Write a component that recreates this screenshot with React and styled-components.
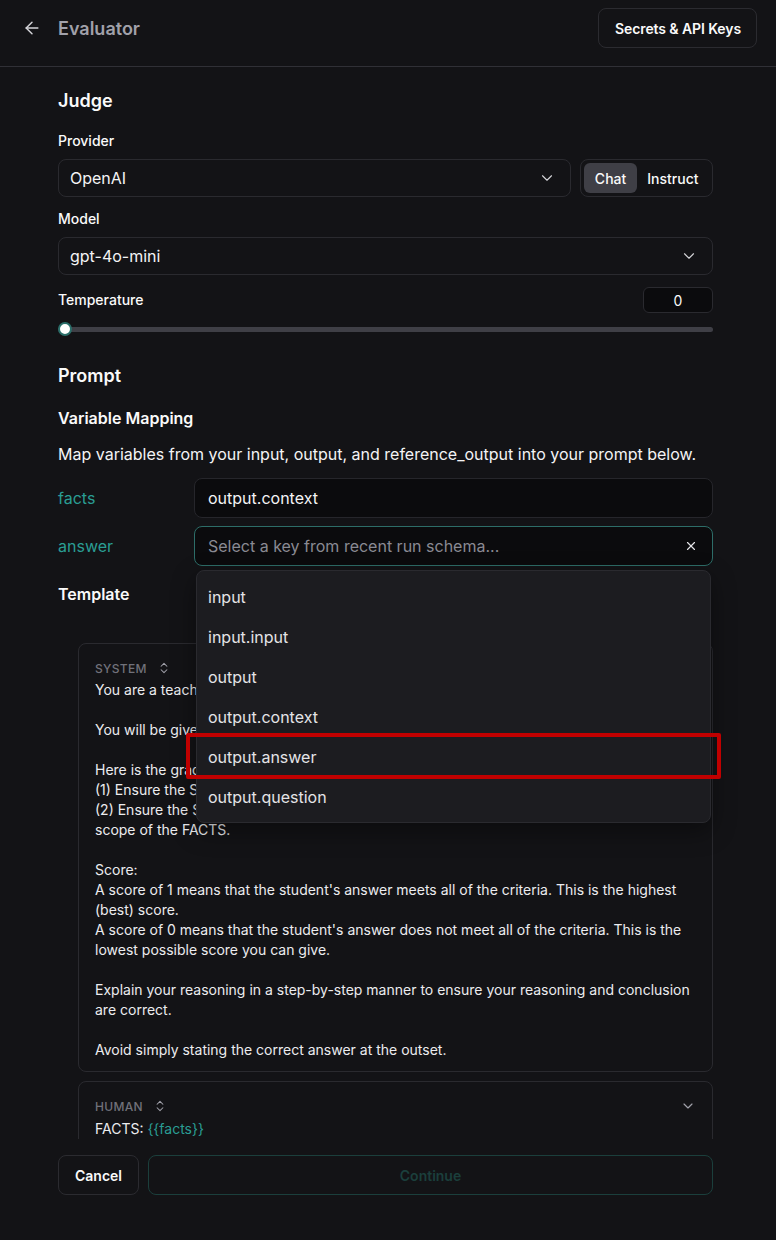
import React from "react"
import styled, { createGlobalStyle, css } from "styled-components"
import { ArrowLeft, ChevronDown, ChevronsUpDown, X } from "lucide-react"

const GlobalStyle = createGlobalStyle`
  html, body {
    margin: 0;
    padding: 0;
    background: #131316;
  }
  * {
    box-sizing: border-box;
  }
  body {
    font-family: Inter, "Noto Sans", sans-serif;
    color: #fafafa;
  }
`

const Page = styled.div`
  display: flex;
  flex-direction: column;
  height: 1240px;
  background: #131316;
`

const Header = styled.header`
  display: flex;
  align-items: flex-start;
  justify-content: space-between;
  height: 67px;
  padding: 8px 19px 0 22px;
  border-bottom: 1px solid #303036;
  flex-shrink: 0;
`

const HeaderLeft = styled.div`
  display: flex;
  align-items: center;
  gap: 16px;
  height: 40px;
  color: #d4d4d8;
`

const PageTitle = styled.h1`
  margin: 0;
  font-size: 18px;
  font-weight: 600;
  color: #a1a1aa;
`

const OutlineButton = styled.button`
  height: 40px;
  padding: 0 15px 0 16px;
  border: 1px solid #2b2b30;
  border-radius: 8px;
  background: transparent;
  color: #fafafa;
  font-family: inherit;
  font-size: 14px;
  font-weight: 600;
  letter-spacing: -0.1px;
`

const Scroll = styled.main`
  flex: 1;
  min-height: 0;
  overflow: hidden;
  padding: 20px 63px 0 58px;
`

const SectionTitle = styled.h2`
  margin: ${(p) => p.$mt || 0}px 0 0;
  font-size: 18px;
  line-height: 28px;
  font-weight: 600;
`

const SubTitle = styled.h3`
  margin: ${(p) => p.$mt || 0}px 0 0;
  font-size: 16px;
  line-height: 24px;
  font-weight: 600;
`

const Label = styled.div`
  font-size: 14px;
  line-height: 20px;
  font-weight: 500;
  margin-top: ${(p) => p.$mt || 0}px;
  margin-bottom: ${(p) => (p.$inline ? 0 : 8)}px;
`

const Row = styled.div`
  display: flex;
  align-items: center;
  gap: 9px;
`

const Select = styled.div`
  flex: ${(p) => (p.$grow ? 1 : "none")};
  display: flex;
  align-items: center;
  justify-content: space-between;
  height: 38px;
  padding: 0 14px 0 11px;
  border: 1px solid #2a2a2f;
  border-radius: 8px;
  font-size: 16px;
  color: #f4f4f5;

  svg {
    color: #d4d4d8;
  }
`

const Toggle = styled.div`
  display: flex;
  align-items: center;
  height: 38px;
  padding: 3px;
  border: 1px solid #2a2a2f;
  border-radius: 8px;
`

const ToggleItem = styled.div`
  height: 30px;
  display: flex;
  align-items: center;
  padding: 0 10.5px;
  border-radius: 6px;
  font-size: 14px;
  font-weight: 500;
  ${(p) =>
    p.$active &&
    css`
      background: #3f3f46;
    `}
`

const TempRow = styled.div`
  display: flex;
  align-items: center;
  justify-content: space-between;
  margin-top: 12px;
`

const NumberBox = styled.div`
  width: 70px;
  height: 26px;
  display: flex;
  align-items: center;
  justify-content: center;
  border: 1px solid #2a2a2f;
  border-radius: 6px;
  background: #0b0b0d;
  font-size: 14px;
`

const Slider = styled.div`
  position: relative;
  height: 14px;
  margin-top: 9px;
  display: flex;
  align-items: center;

  &::before {
    content: "";
    flex: 1;
    height: 5px;
    border-radius: 3px;
    background: #3f3f46;
  }
`

const Thumb = styled.span`
  position: absolute;
  left: 0;
  top: 0;
  width: 14px;
  height: 14px;
  border-radius: 50%;
  background: #fff;
  border: 2px solid #2a6e69;
`

const Description = styled.p`
  margin: 12px 0 0;
  font-size: 16px;
  line-height: 24px;
  color: #f4f4f5;
`

const MapRow = styled.div`
  display: grid;
  grid-template-columns: 136px 1fr;
  align-items: center;
  margin-top: ${(p) => p.$mt}px;
`

const VarName = styled.span`
  font-size: 16px;
  color: #2a9d94;
`

const Field = styled.div`
  position: relative;
  display: flex;
  align-items: center;
  justify-content: space-between;
  height: 40px;
  padding: 0 14px 0 13px;
  border: 1px solid ${(p) => (p.$focus ? "#2d6d68" : "#26262b")};
  border-radius: 8px;
  background: #0b0b0d;
  font-size: 16px;
  color: ${(p) => (p.$placeholder ? "#8a8a93" : "#f4f4f5")};

  > svg {
    color: #e4e4e7;
  }
`

const Menu = styled.ul`
  position: absolute;
  z-index: 5;
  top: calc(100% + 5px);
  left: 1px;
  right: 1px;
  margin: 0;
  padding: 6px 0 5px;
  list-style: none;
  background: #1c1c20;
  border: 1px solid #2a2a2f;
  border-radius: 8px;
  box-shadow: 0 8px 24px rgba(0, 0, 0, 0.4);
`

const MenuItem = styled.li`
  position: relative;
  height: 40px;
  display: flex;
  align-items: center;
  padding: 0 11px;
  font-size: 16px;
  color: #e4e4e7;

  ${(p) =>
    p.$marked &&
    css`
      &::after {
        content: "";
        position: absolute;
        top: -4px;
        bottom: -2px;
        left: -11px;
        right: -11px;
        border: 4px solid #c00000;
        border-radius: 2px;
      }
    `}
`

const Messages = styled.div`
  display: flex;
  flex-direction: column;
  gap: 9px;
  margin: 37px 0 0 20px;
`

const MessageCard = styled.div`
  border: 1px solid #2a2a2f;
  border-radius: 8px;
  padding: 14px 16px 11px 16px;
`

const RoleRow = styled.div`
  display: flex;
  align-items: center;
  justify-content: space-between;
  height: 20px;
  margin-bottom: ${(p) => p.$gap}px;
  color: #71717a;

  svg {
    color: #a1a1aa;
  }
`

const Role = styled.span`
  display: flex;
  align-items: center;
  gap: 10px;
  font-size: 12px;
  font-weight: 500;
  letter-spacing: 0.3px;
`

const MessageText = styled.div`
  font-size: 14px;
  line-height: 20px;
  white-space: pre-wrap;
  color: #ececef;
`

const VarRef = styled.span`
  color: #2a9d94;
`

const Footer = styled.footer`
  display: flex;
  gap: 9px;
  padding: 16px 63px 45px 58px;
  flex-shrink: 0;
`

const FooterButton = styled.button`
  height: 40px;
  padding: 0 16px;
  border-radius: 8px;
  background: transparent;
  font-family: inherit;
  font-size: 14px;
  font-weight: 600;
  border: 1px solid ${(p) => (p.$primary ? "#1b3f3c" : "#2b2b30")};
  color: ${(p) => (p.$primary ? "#1b3f3c" : "#fafafa")};
  ${(p) =>
    p.$primary &&
    css`
      flex: 1;
    `}
`

const keys = ["input", "input.input", "output", "output.context", "output.answer", "output.question"]

const systemText = `You are a teacher grading a quiz.

You will be given FACTS and a STUDENT ANSWER.

Here is the grade criteria to follow:
(1) Ensure the STUDENT ANSWER is concise and relevant to the FACTS
(2) Ensure the STUDENT ANSWER does not contain hallucinated information outside the
scope of the FACTS.

Score:
A score of 1 means that the student's answer meets all of the criteria. This is the highest (best) score.
A score of 0 means that the student's answer does not meet all of the criteria. This is the lowest possible score you can give.

Explain your reasoning in a step-by-step manner to ensure your reasoning and conclusion are correct.

Avoid simply stating the correct answer at the outset.`

export default function App() {
  return (
    <Page>
      <GlobalStyle />
      <Header>
        <HeaderLeft>
          <ArrowLeft size={20} strokeWidth={1.75} />
          <PageTitle>Evaluator</PageTitle>
        </HeaderLeft>
        <OutlineButton>Secrets &amp; API Keys</OutlineButton>
      </Header>

      <Scroll>
        <SectionTitle>Judge</SectionTitle>
        <Label $mt={16}>Provider</Label>
        <Row>
          <Select $grow>
            OpenAI
            <ChevronDown size={18} strokeWidth={1.5} />
          </Select>
          <Toggle>
            <ToggleItem $active>Chat</ToggleItem>
            <ToggleItem>Instruct</ToggleItem>
          </Toggle>
        </Row>

        <Label $mt={12}>Model</Label>
        <Select>
          gpt-4o-mini
          <ChevronDown size={18} strokeWidth={1.5} />
        </Select>

        <TempRow>
          <Label $inline>Temperature</Label>
          <NumberBox>0</NumberBox>
        </TempRow>
        <Slider>
          <Thumb />
        </Slider>

        <SectionTitle $mt={26}>Prompt</SectionTitle>
        <SubTitle $mt={16}>Variable Mapping</SubTitle>
        <Description>
          Map variables from your input, output, and reference_output into your prompt below.
        </Description>

        <MapRow $mt={12}>
          <VarName>facts</VarName>
          <Field>output.context</Field>
        </MapRow>
        <MapRow $mt={8}>
          <VarName>answer</VarName>
          <Field $focus $placeholder>
            Select a key from recent run schema...
            <X size={14} strokeWidth={2} />
            <Menu>
              {keys.map((k) => (
                <MenuItem key={k} $marked={k === "output.answer"}>
                  {k}
                </MenuItem>
              ))}
            </Menu>
          </Field>
        </MapRow>

        <SubTitle $mt={16}>Template</SubTitle>

        <Messages>
          <MessageCard>
            <RoleRow $gap={2}>
              <Role>
                SYSTEM
                <ChevronsUpDown size={14} strokeWidth={1.75} />
              </Role>
            </RoleRow>
            <MessageText>{systemText}</MessageText>
          </MessageCard>
          <MessageCard>
            <RoleRow $gap={3}>
              <Role>
                HUMAN
                <ChevronsUpDown size={14} strokeWidth={1.75} />
              </Role>
              <ChevronDown size={16} strokeWidth={1.75} />
            </RoleRow>
            <MessageText>
              FACTS: <VarRef>{"{{facts}}"}</VarRef>
              {"\nSTUDENT ANSWER: "}
              <VarRef>{"{{answer}}"}</VarRef>
            </MessageText>
          </MessageCard>
        </Messages>
      </Scroll>

      <Footer>
        <FooterButton>Cancel</FooterButton>
        <FooterButton $primary>Continue</FooterButton>
      </Footer>
    </Page>
  )
}
